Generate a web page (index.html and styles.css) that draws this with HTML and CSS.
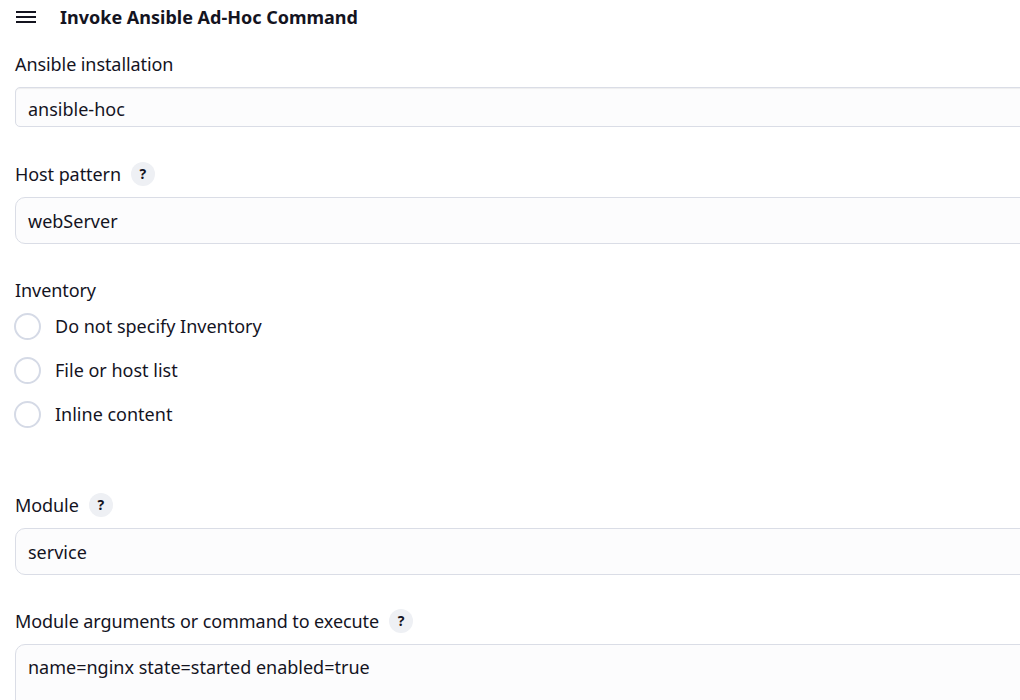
FILE: index.html
```html
<!DOCTYPE html>
<html>
<head>
<meta charset="utf-8">
<link rel="stylesheet" href="styles.css">
</head>
<body>
<div class="page">
  <div class="header">
    <svg class="burger" width="20" height="12" viewBox="0 0 20 12"><path d="M0 1h20M0 6h20M0 11h20" stroke="#14141f" stroke-width="2"/></svg>
    <span class="title">Invoke Ansible Ad-Hoc Command</span>
  </div>

  <div class="field f1">
    <div class="label">Ansible installation</div>
    <div class="select">ansible-hoc</div>
  </div>

  <div class="field f2">
    <div class="label">Host pattern <span class="help">?</span></div>
    <div class="input">webServer</div>
  </div>

  <div class="field f3">
    <div class="label">Inventory</div>
    <div class="radios">
      <div class="radio"><span class="circle"></span><span>Do not specify Inventory</span></div>
      <div class="radio"><span class="circle"></span><span>File or host list</span></div>
      <div class="radio"><span class="circle"></span><span>Inline content</span></div>
    </div>
  </div>

  <div class="field f4">
    <div class="label">Module <span class="help">?</span></div>
    <div class="input">service</div>
  </div>

  <div class="field f5">
    <div class="label">Module arguments or command to execute <span class="help">?</span></div>
    <div class="input textarea">name=nginx state=started enabled=true</div>
  </div>
</div>
</body>
</html>
```
FILE: styles.css
```css
html, body {
  margin: 0;
  padding: 0;
  background: #ffffff;
}
body {
  font-family: "Noto Sans", "Open Sans", sans-serif;
  font-size: 18px;
  color: #14141f;
  overflow: hidden;
  height: 700px;
}
.page {
  padding: 5px 0 0 15px;
}
.header {
  display: flex;
  align-items: center;
  height: 24px;
  line-height: 24px;
}
.burger {
  margin-left: 1px;
  margin-right: 24px;
}
.title {
  font-weight: 700;
}
.field {
  display: flex;
  flex-direction: column;
}
.label {
  display: flex;
  align-items: center;
  height: 24px;
  line-height: 24px;
  margin-bottom: 11px;
  letter-spacing: -0.08px;
}
.f1 { margin-top: 23px; }
.f2 { margin-top: 35px; }
.f3 { margin-top: 34px; }
.f4 { margin-top: 57px; }
.f5 { margin-top: 34px; }
.f3 .label { margin-bottom: 2px; }
.help {
  display: inline-flex;
  align-items: center;
  justify-content: center;
  width: 24px;
  height: 24px;
  margin-left: 10px;
  border-radius: 50%;
  background: #eef0f4;
  font-size: 14px;
  font-weight: 700;
  color: #14141f;
  letter-spacing: 0;
}
.select, .input {
  box-sizing: border-box;
  width: 1040px;
  display: flex;
  align-items: center;
  padding-left: 12px;
  background: #fcfcfd;
  border: 1px solid #dadde6;
}
.select {
  height: 40px;
  border-radius: 5px;
  padding-top: 3px;
  box-shadow: inset 0 1px 1px rgba(0,0,0,0.06);
}
.input {
  height: 47px;
  border-radius: 10px;
}
.textarea {
  height: 90px;
  align-items: flex-start;
  padding-top: 10px;
}
.radios {
  display: flex;
  flex-direction: column;
}
.radio {
  display: flex;
  align-items: center;
  height: 44px;
}
.circle {
  box-sizing: border-box;
  width: 27px;
  height: 27px;
  border-radius: 50%;
  border: 2px solid #d5dae6;
  background: #ffffff;
  margin-left: -1px;
  margin-right: 14px;
}
```
